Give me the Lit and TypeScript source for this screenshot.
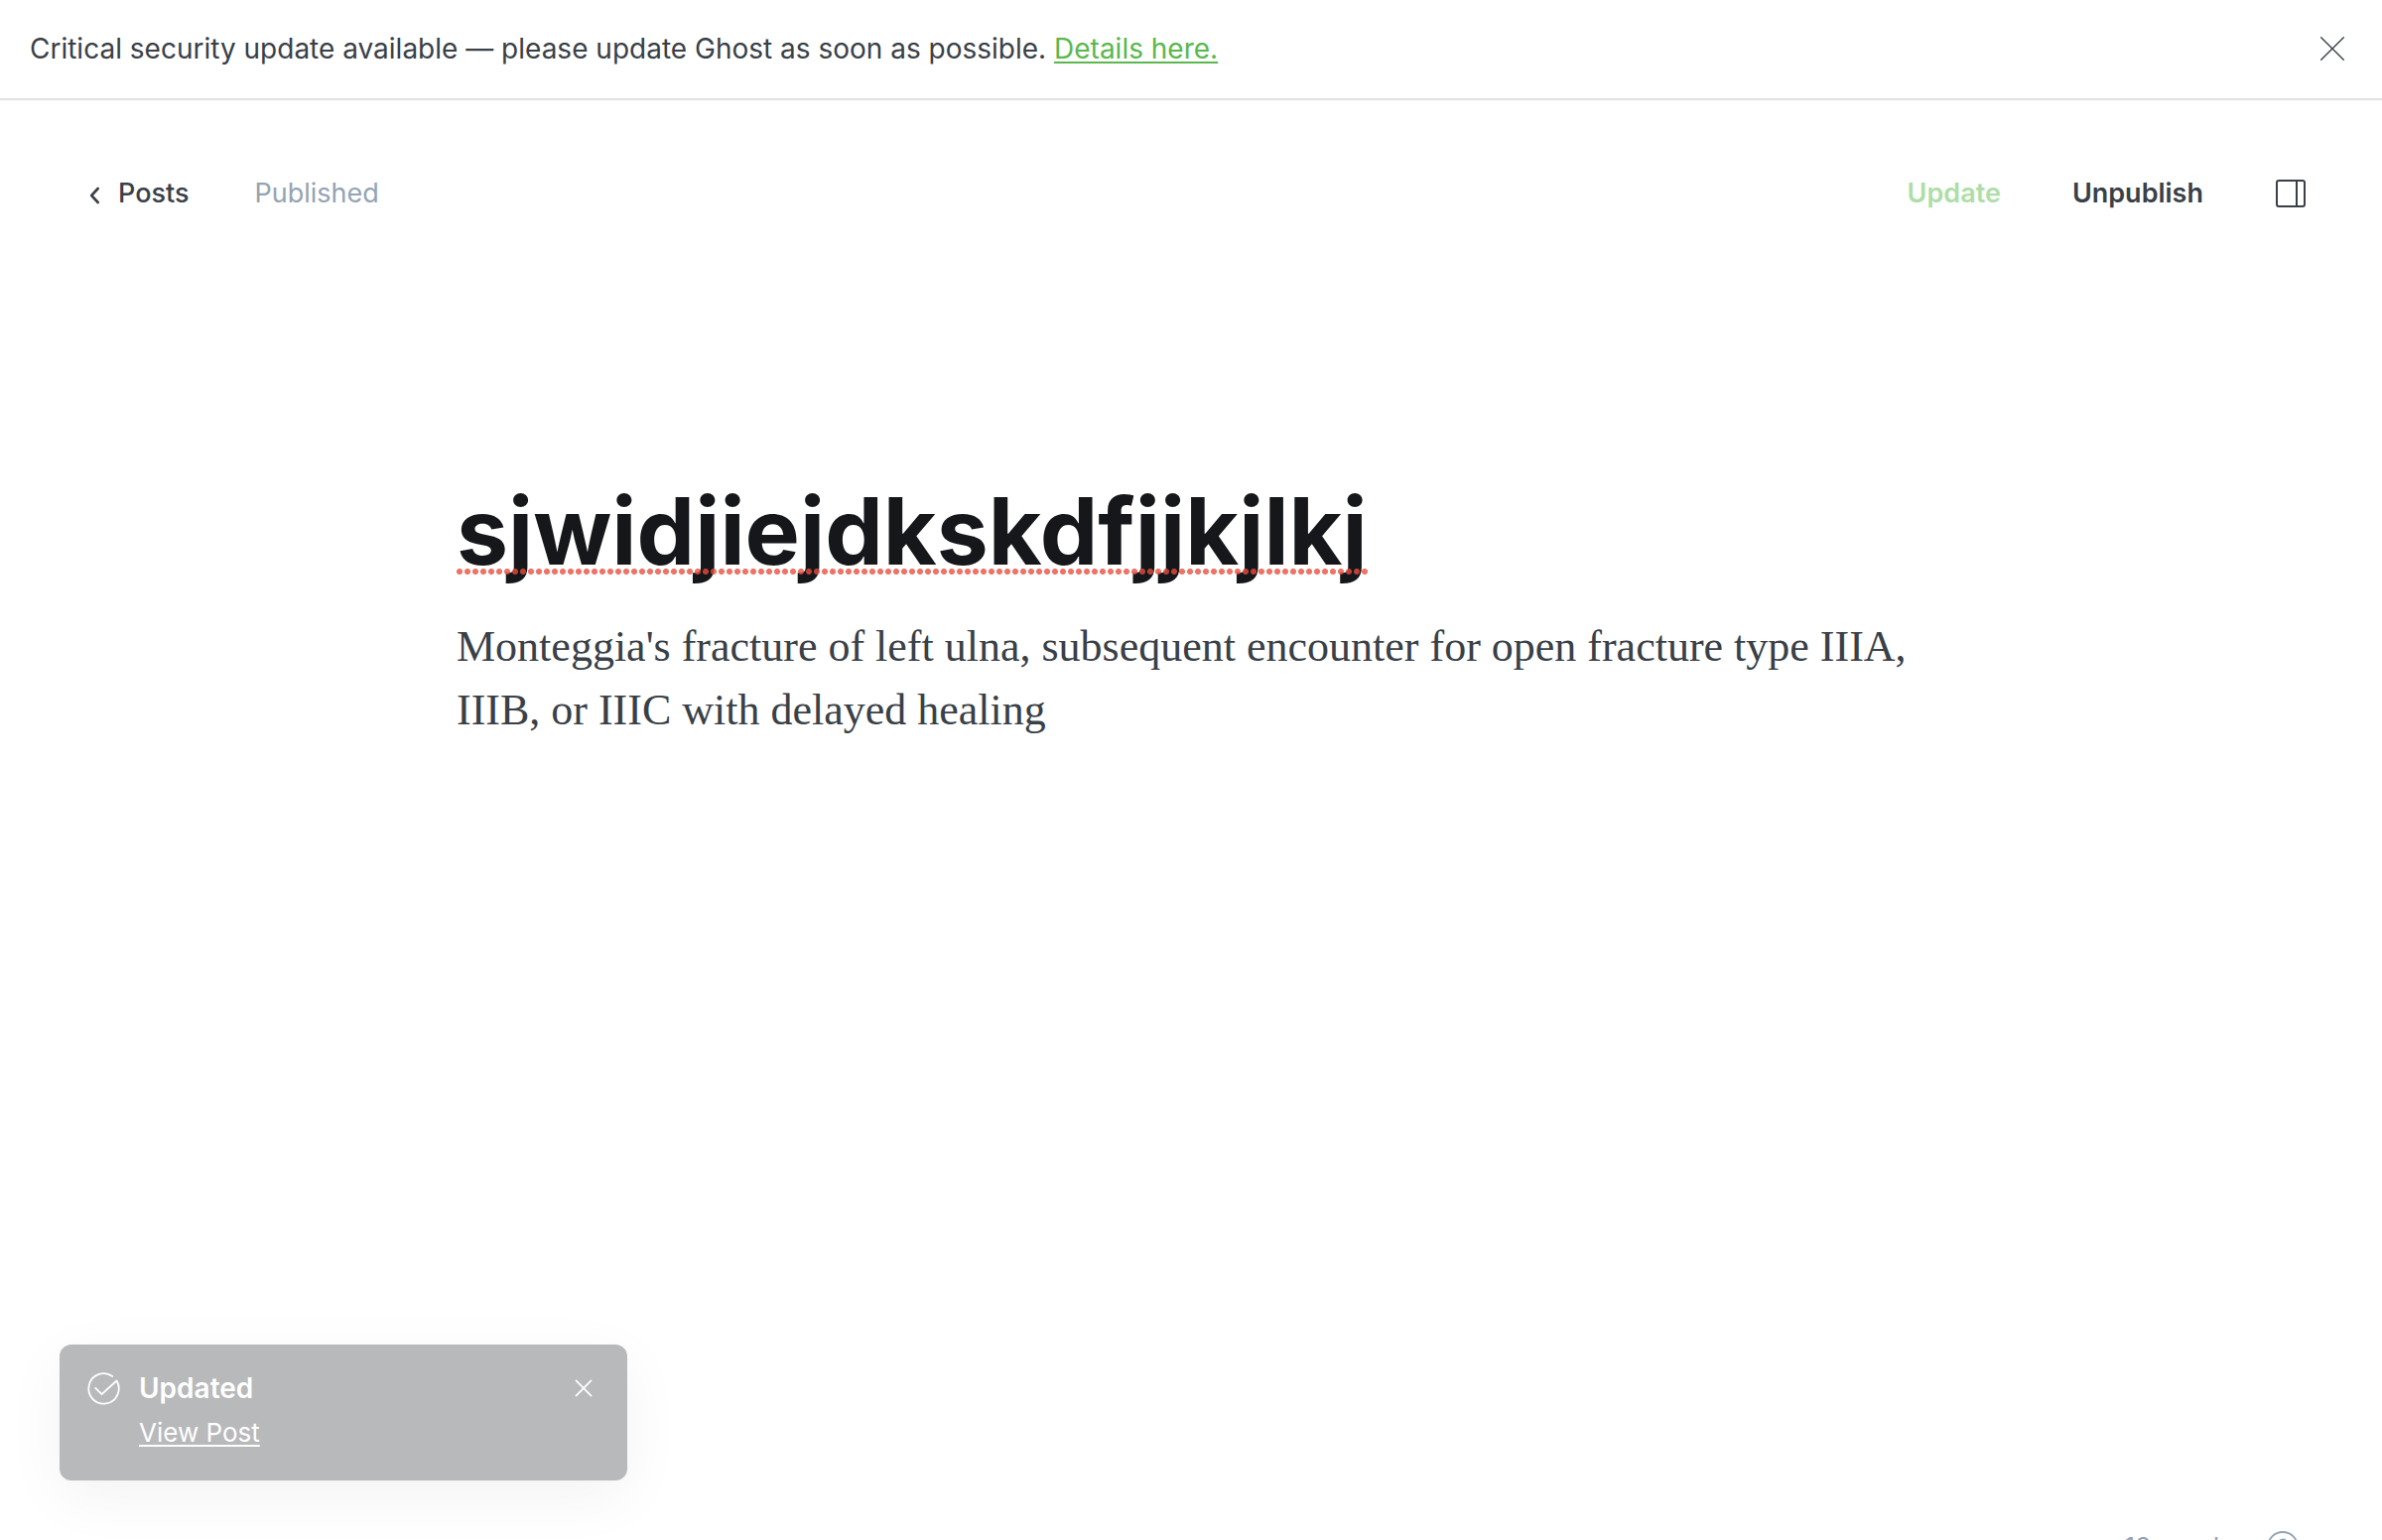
import { LitElement, html, css, svg } from "lit";
import { customElement, state } from "lit/decorators.js";

const closeIcon = (size: number, stroke: number) => svg`
  <svg width=${size} height=${size} viewBox="0 0 24 24" fill="none" stroke="currentColor" stroke-width=${stroke} stroke-linecap="round" aria-hidden="true">
    <path d="M.7 .7l22.6 22.6M23.3 .7L.7 23.3" />
  </svg>`;

@customElement("app-root")
export class AppRoot extends LitElement {
  @state() private heading = "sjwidjiejdkskdfjjkjlkj";
  @state() private body =
    "Monteggia's fracture of left ulna, subsequent encounter for open fracture type IIIA, IIIB, or IIIC with delayed healing";
  @state() private bannerOpen = true;
  @state() private toastOpen = true;

  static styles = css`
    :host {
      display: block;
      position: relative;
      height: 100vh;
      overflow: hidden;
      background: #fff;
      color: #394047;
      font-family: Inter, "Liberation Sans", sans-serif;
      font-size: 28px;
      line-height: 40px;
    }
    * {
      box-sizing: border-box;
    }
    svg {
      display: block;
      overflow: visible;
    }
    button,
    input,
    textarea {
      margin: 0;
      padding: 0;
      border: 0;
      outline: 0;
      background: none;
      color: inherit;
      font: inherit;
    }
    button {
      cursor: pointer;
    }
    a {
      color: inherit;
    }
    .banner {
      display: flex;
      align-items: center;
      justify-content: space-between;
      gap: 32px;
      padding: 29px 38px 30px 30px;
      border-bottom: 2px solid #e1e1e1;
    }
    .banner p {
      margin: 0;
    }
    .details {
      color: #5ab84c;
      text-decoration-thickness: 2px;
      text-underline-offset: 3px;
    }
    .editor {
      display: flex;
      flex-direction: column;
      height: calc(100vh - 74px);
    }
    .toolbar {
      display: flex;
      align-items: center;
      justify-content: space-between;
      padding: 74px 76px 0 88px;
      font-size: 27px;
    }
    .crumbs,
    .actions {
      display: flex;
      align-items: center;
    }
    .crumbs {
      gap: 66px;
    }
    .actions {
      gap: 72px;
      font-weight: 600;
    }
    .back {
      display: flex;
      align-items: center;
      gap: 18px;
      font-weight: 500;
      text-decoration: none;
    }
    .status {
      color: #95a3b3;
    }
    .update {
      color: #aedea7;
    }
    .canvas {
      flex: 1;
      width: 100%;
      max-width: 1480px;
      margin: 0 auto;
      padding-top: 260px;
    }
    .title {
      position: relative;
      width: fit-content;
      max-width: 100%;
      color: #15171a;
      font-size: 93px;
      font-weight: 700;
      line-height: 120px;
    }
    .title input {
      display: block;
      field-sizing: content;
      height: 120px;
      max-width: 100%;
    }
    .title::after {
      content: "";
      position: absolute;
      left: 0;
      right: 0;
      bottom: 16px;
      height: 6px;
      background: radial-gradient(circle at 3px 3px, rgba(233, 76, 60, 0.78) 2.7px, transparent 3.3px) 0 0 / 8px 6px repeat-x;
      pointer-events: none;
    }
    .body {
      display: block;
      width: 100%;
      margin-top: 25px;
      field-sizing: content;
      resize: none;
      overflow: hidden;
      font-family: Georgia, "Liberation Serif", serif;
      font-size: 44px;
      line-height: 64px;
    }
    .footer {
      display: flex;
      align-items: center;
      justify-content: flex-end;
      gap: 34px;
      padding: 0 84px;
      color: #95a3b3;
      font-size: 26px;
    }
    .toast {
      position: absolute;
      left: 60px;
      bottom: 60px;
      display: grid;
      grid-template-columns: 32px 1fr auto;
      column-gap: 20px;
      align-items: center;
      width: 572px;
      padding: 24px 36px 28px 28px;
      border-radius: 12px;
      background: #b8b9bb;
      color: #fff;
      box-shadow: 0 2px 4px rgba(0, 0, 0, 0.01), 0 16px 60px rgba(0, 0, 0, 0.05);
    }
    .toast strong {
      font-weight: 600;
    }
    .view {
      grid-column: 2;
      justify-self: start;
      margin-top: 5px;
      font-size: 26px;
      text-decoration-thickness: 2px;
      text-underline-offset: 3px;
    }
  `;

  private get words() {
    return this.body.trim().split(/\s+/).filter(Boolean).length;
  }

  render() {
    return html`
      ${this.bannerOpen
        ? html`<aside class="banner">
            <p>
              Critical security update available — please update Ghost as soon as possible.
              <a class="details" href="#details">Details here.</a>
            </p>
            <button aria-label="Dismiss" @click=${() => (this.bannerOpen = false)}>${closeIcon(24, 1.4)}</button>
          </aside>`
        : ""}
      <section class="editor">
        <header class="toolbar">
          <nav class="crumbs">
            <a class="back" href="#posts">
              <svg width="13" height="18" viewBox="0 0 13 18" fill="none" stroke="currentColor" stroke-width="2.6" stroke-linecap="round" stroke-linejoin="round" aria-hidden="true">
                <path d="M10.700 4L4.200 11L10.700 18" />
              </svg>
              Posts
            </a>
            <span class="status">Published</span>
          </nav>
          <div class="actions">
            <button class="update">Update</button>
            <button>Unpublish</button>
            <button aria-label="Settings">
              <svg width="32" height="32" viewBox="0 0 32 32" fill="none" stroke="currentColor" stroke-width="2" stroke-linejoin="round" aria-hidden="true">
                <rect x="2" y="3" width="28" height="26" rx="2" />
                <path d="M22 3v26" />
              </svg>
            </button>
          </div>
        </header>
        <main class="canvas">
          <div class="title">
            <input
              aria-label="Post title"
              spellcheck="false"
              .value=${this.heading}
              @input=${(e: Event) => (this.heading = (e.target as HTMLInputElement).value)}
            />
          </div>
          <textarea
            class="body"
            aria-label="Post content"
            spellcheck="false"
            .value=${this.body}
            @input=${(e: Event) => (this.body = (e.target as HTMLTextAreaElement).value)}
          ></textarea>
        </main>
        <footer class="footer">
          <span>${this.words} words</span>
          <a href="#help" aria-label="Help">
            <svg width="32" height="32" viewBox="0 0 32 32" fill="none" stroke="currentColor" stroke-width="1.800" stroke-linecap="round" aria-hidden="true">
              <circle cx="16" cy="16" r="15" />
              <path d="M12 12.500a4 4 0 1 1 5.500 3.700c-1 .5-1.500 1.200-1.500 2.300v1" />
              <circle cx="16" cy="23" r=".8" fill="currentColor" />
            </svg>
          </a>
        </footer>
      </section>
      ${this.toastOpen
        ? html`<div class="toast" role="status">
            <svg width="32" height="32" viewBox="0 0 32 32" fill="none" stroke="currentColor" stroke-width="1.800" stroke-linecap="round" stroke-linejoin="round" aria-hidden="true">
              <path d="M25.300 4A15.200 15.200 0 1 0 29.500 8.500L14.500 22.200L8.200 15.800" />
            </svg>
            <strong>Updated</strong>
            <button aria-label="Close" @click=${() => (this.toastOpen = false)}>${closeIcon(16, 2.6)}</button>
            <a class="view" href="#view">View Post</a>
          </div>`
        : ""}
    `;
  }
}
